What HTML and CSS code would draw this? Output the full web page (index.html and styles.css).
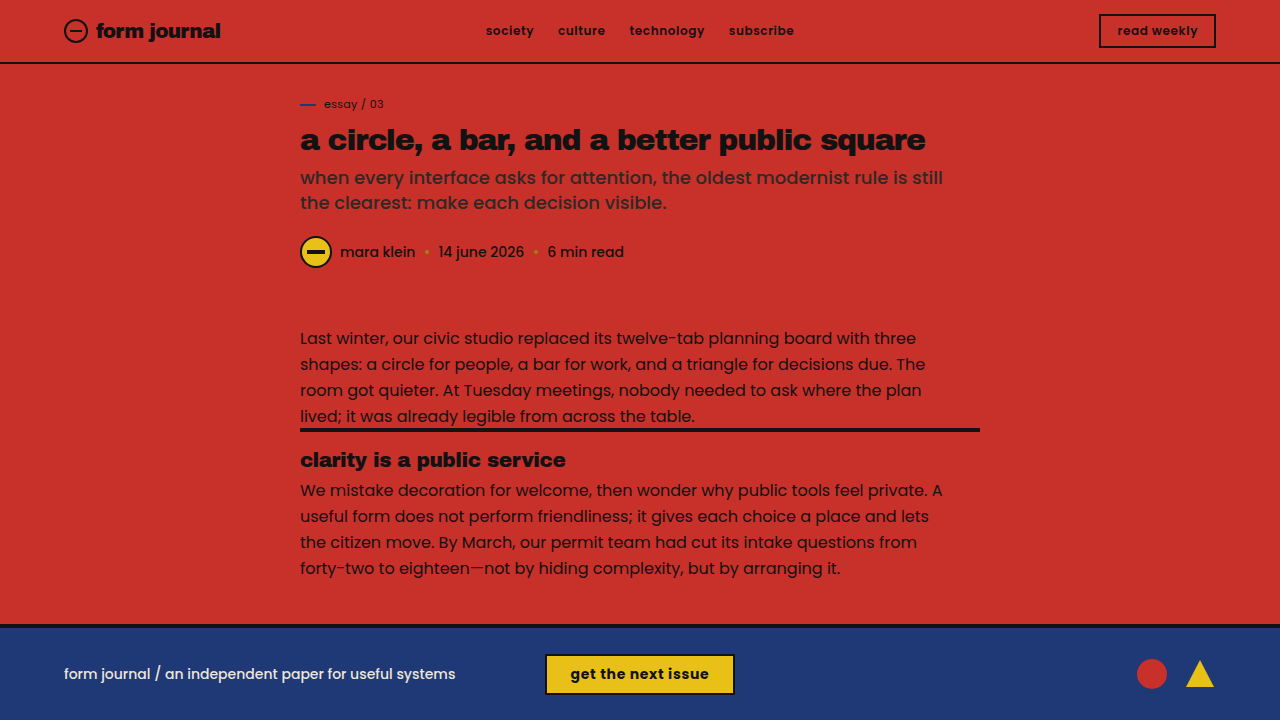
FILE: index.html
```html
<!DOCTYPE html>
<html lang="en">
<head>
    <meta charset="UTF-8">
    <meta name="viewport" content="width=device-width, initial-scale=1.0">
    <title>form journal</title>
    <link rel="stylesheet" href="styles.css">
</head>
<body>

<header class="site-header">
    <a class="brand" href="#">
        <svg class="brand-mark" viewBox="0 0 24 24" aria-hidden="true">
            <circle cx="12" cy="12" r="11" fill="none" stroke="#121212" stroke-width="2"/>
            <rect x="6" y="11" width="12" height="2" fill="#121212"/>
        </svg>
        <span>form journal</span>
    </a>
    <nav class="site-nav">
        <a href="#">society</a>
        <a href="#">culture</a>
        <a href="#">technology</a>
        <a href="#">subscribe</a>
    </nav>
    <button class="button button-outline" type="button">read weekly</button>
</header>

<main class="article">
    <p class="eyebrow">essay / 03</p>
    <h1>a circle, a bar, and a better public square</h1>
    <p class="dek">when every interface asks for attention, the oldest modernist rule is still the clearest: make each decision visible.</p>

    <div class="byline">
        <svg class="avatar" viewBox="0 0 32 32" aria-hidden="true">
            <circle cx="16" cy="16" r="15" fill="#e8c018" stroke="#121212" stroke-width="2"/>
            <rect x="7" y="14" width="18" height="4" fill="#121212"/>
        </svg>
        <span>mara klein</span>
        <span class="dot"></span>
        <time datetime="2026-06-14">14 june 2026</time>
        <span class="dot"></span>
        <span>6 min read</span>
    </div>

    <p class="copy">Last winter, our civic studio replaced its twelve-tab planning board with three shapes: a circle for people, a bar for work, and a triangle for decisions due. The room got quieter. At Tuesday meetings, nobody needed to ask where the plan lived; it was already legible from across the table.</p>

    <section class="section">
        <h2>clarity is a public service</h2>
        <p class="copy">We mistake decoration for welcome, then wonder why public tools feel private. A useful form does not perform friendliness; it gives each choice a place and lets the citizen move. By March, our permit team had cut its intake questions from forty-two to eighteen—not by hiding complexity, but by arranging it.</p>
    </section>
</main>

<footer class="site-footer">
    <p class="tagline">form journal / an independent paper for useful systems</p>
    <button class="button button-solid" type="button">get the next issue</button>
    <div class="shapes">
        <svg viewBox="0 0 32 32" aria-hidden="true">
            <circle cx="16" cy="15" r="15" fill="#c8302a"/>
        </svg>
        <svg viewBox="0 0 32 32" aria-hidden="true">
            <path d="M16 1 L30 28 H2 Z" fill="#e8c018"/>
        </svg>
    </div>
</footer>

</body>
</html>
```

FILE: styles.css
```css
* {
    box-sizing: border-box;
}

body {
    margin: 0;
    min-height: 100vh;
    display: flex;
    flex-direction: column;
    background-color: #c8302a;
    color: #121212;
    font-family: Poppins, Inter, "Liberation Sans", sans-serif;
    font-size: 16px;
}

h1, h2, p {
    margin: 0;
}

h1, h2, .brand {
    font-family: "Archivo Black", Inter, "Liberation Sans", sans-serif;
    font-weight: 400;
}

a {
    color: inherit;
    text-decoration: none;
}

/* Header */
.site-header {
    display: grid;
    grid-template-columns: 1fr auto 1fr;
    align-items: center;
    padding: 14px 64px;
    border-bottom: 2px solid #121212;
}

.brand {
    display: flex;
    align-items: center;
    gap: 8px;
    font-size: 20px;
    line-height: 24px;
    letter-spacing: -0.04em;
}

.brand-mark {
    width: 24px;
    height: 24px;
}

.site-nav {
    display: flex;
    gap: 24px;
    font-size: 12px;
    line-height: 18px;
    font-weight: 600;
    letter-spacing: 0.05em;
}

.button {
    border: 2px solid #121212;
    color: #121212;
    font-family: inherit;
    letter-spacing: 0.05em;
    cursor: pointer;
}

.button-outline {
    justify-self: end;
    padding: 6px 16px;
    background-color: transparent;
    font-size: 12px;
    line-height: 18px;
    font-weight: 600;
}

/* Article */
.article {
    width: 100%;
    max-width: 680px;
    margin: 0 auto;
    padding: 32px 0 40px;
    flex: 1;
}

.eyebrow {
    display: flex;
    align-items: center;
    gap: 8px;
    font-size: 11px;
    line-height: 17px;
    letter-spacing: 0.03em;
}

.eyebrow::before {
    content: "";
    width: 16px;
    height: 2px;
    background-color: #1f3876;
}

h1 {
    margin-top: 7px;
    font-size: 30px;
    line-height: 40px;
    letter-spacing: -0.04em;
}

.dek {
    max-width: 650px;
    margin-top: 5px;
    color: #2d2926;
    font-size: 18px;
    line-height: 25px;
    font-weight: 500;
}

.byline {
    display: flex;
    align-items: center;
    gap: 8px;
    margin: 21px 0 58px;
    font-size: 14px;
    line-height: 21px;
    font-weight: 500;
}

.avatar {
    width: 32px;
    height: 32px;
}

.dot {
    width: 4px;
    height: 4px;
    margin: 0 1px 0 2px;
    border-radius: 50%;
    background-color: #96860f;
}

.copy {
    max-width: 650px;
    line-height: 26px;
}

.section {
    margin-top: -2px;
    border-top: 4px solid #121212;
    padding-top: 15px;
}

h2 {
    margin-bottom: 5px;
    font-size: 20px;
    line-height: 26px;
    letter-spacing: -0.02em;
}

/* Footer */
.site-footer {
    display: grid;
    grid-template-columns: 1fr auto 1fr;
    align-items: center;
    padding: 26px 64px 25px;
    border-top: 4px solid #121212;
    background-color: #1f3876;
}

.tagline {
    color: #ece6da;
    font-size: 14px;
    line-height: 21px;
    font-weight: 500;
}

.button-solid {
    padding: 8px 24px;
    background-color: #e8c018;
    font-size: 14px;
    line-height: 21px;
    font-weight: 700;
}

.shapes {
    display: flex;
    justify-content: flex-end;
    gap: 16px;
}

.shapes svg {
    width: 32px;
    height: 32px;
}
```
